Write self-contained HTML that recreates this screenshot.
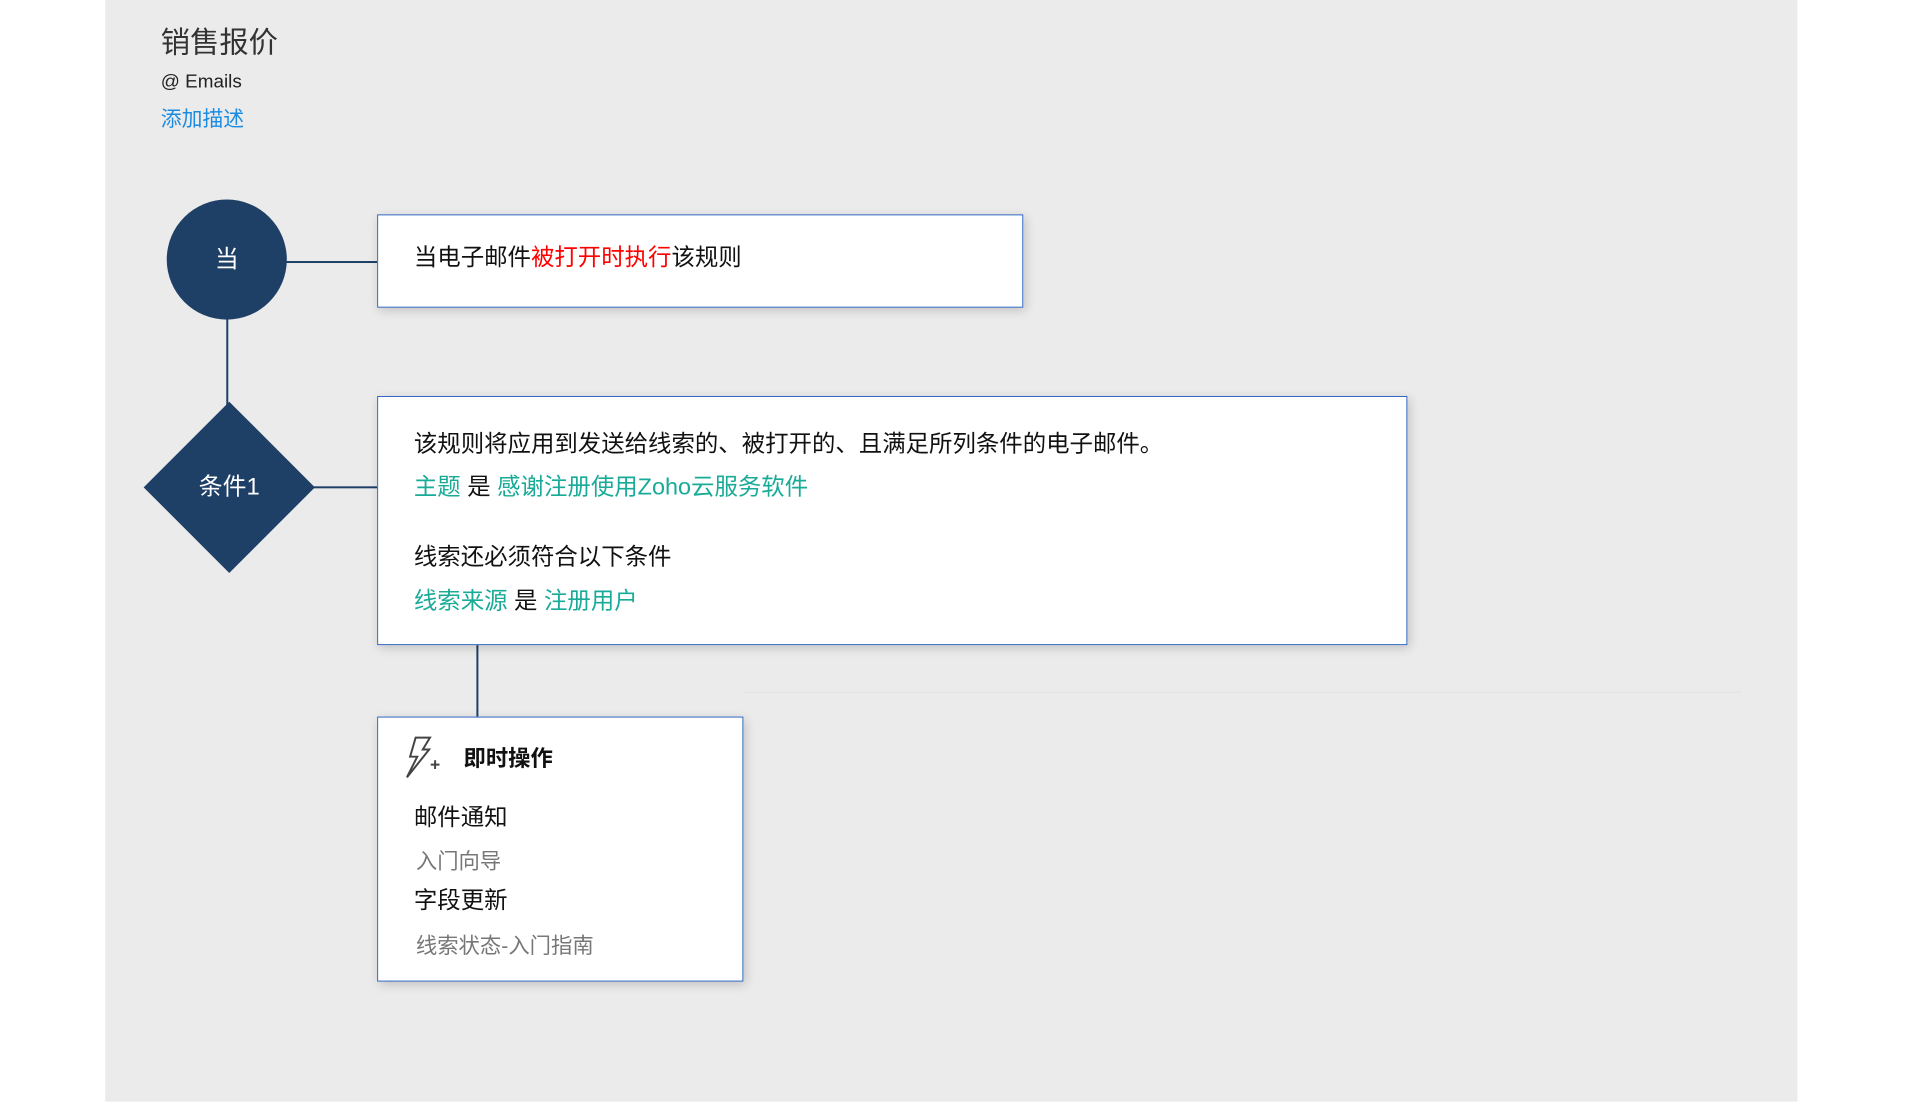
<!DOCTYPE html>
<html><head><meta charset="utf-8">
<style>
*{margin:0;padding:0;box-sizing:border-box}
html,body{width:1910px;height:1100px;background:#fff;overflow:hidden;font-family:"Liberation Sans","Noto Sans CJK SC",sans-serif}
.wrap{position:absolute;left:0;top:0;width:1920px;height:1110px;transform:scale(0.9925);transform-origin:0 0}
.panel{position:absolute;left:106px;top:0;width:1705px;height:1110px;background:#ebebeb}
.abs{position:absolute;white-space:nowrap}
.box{position:absolute;background:#fff;border:1px solid #2f66c4;box-shadow:2px 3px 10px rgba(0,0,0,.18)}
.ln{position:absolute;background:#1e3f66}
.t{color:#19ab97}
.txt{font-size:23.6px;color:#111;line-height:1}
</style></head><body>
<div class="wrap">
<div class="panel"></div>
<div class="abs" style="left:162px;top:29px;font-size:29.5px;color:#333;line-height:1">销售报价</div>
<div class="abs" style="left:162px;top:73px;font-size:19px;color:#222;line-height:1">@ Emails</div>
<div class="abs" style="left:162px;top:110px;font-size:21px;color:#1a8be0;line-height:1">添加描述</div>

<div class="ln" style="left:228px;top:300px;width:2px;height:110px"></div>
<div class="ln" style="left:288px;top:263px;width:92px;height:2px"></div>
<div class="ln" style="left:316px;top:490px;width:64px;height:2px"></div>
<div class="ln" style="left:480px;top:649px;width:2px;height:73px"></div>
<div class="abs" style="left:749px;top:697px;width:1006px;height:1px;background:#e2e2e2"></div>

<div class="abs" style="left:168px;top:201px;width:121px;height:121px;border-radius:50%;background:#1e3f66;color:#fff;font-size:24px;line-height:121px;text-align:center">当</div>
<div class="abs" style="left:170px;top:430px;width:122px;height:122px;background:#1e3f66;transform:rotate(45deg)"></div>
<div class="abs" style="left:170px;top:430px;width:122px;height:122px;color:#fff;font-size:24px;line-height:122px;text-align:center">条件1</div>

<div class="box" style="left:380px;top:216px;width:651px;height:94px">
 <div class="abs txt" style="left:36px;top:32px">当电子邮件<span style="color:#f00">被打开时执行</span>该规则</div>
</div>

<div class="box" style="left:380px;top:399px;width:1038px;height:251px">
 <div class="abs txt" style="left:36px;top:37px">该规则将应用到发送给线索的、被打开的、且满足所列条件的电子邮件。</div>
 <div class="abs txt" style="left:36px;top:80px"><span class="t">主题</span> 是 <span class="t">感谢注册使用Zoho云服务软件</span></div>
 <div class="abs txt" style="left:36px;top:151px">线索还必须符合以下条件</div>
 <div class="abs txt" style="left:36px;top:195px"><span class="t">线索来源</span> 是 <span class="t">注册用户</span></div>
</div>

<div class="box" style="left:380px;top:722px;width:369px;height:267px">
 <svg class="abs" style="left:25px;top:17px" width="48" height="48" viewBox="0 0 60 60" fill="none" stroke="#444" stroke-width="2.5" stroke-linejoin="miter">
  <path d="M16 4 L34 4 L25 19 L33 19 L5 54 L18 28 L9 28 Z"/>
  <path d="M35 38 H46 M40.5 32.5 V43.5"/>
 </svg>
 <div class="abs" style="left:86px;top:31px;font-size:22.5px;font-weight:bold;color:#111;line-height:1">即时操作</div>
 <div class="abs txt" style="left:36px;top:90px">邮件通知</div>
 <div class="abs" style="left:38px;top:135px;font-size:21.5px;color:#777;line-height:1">入门向导</div>
 <div class="abs txt" style="left:36px;top:174px">字段更新</div>
 <div class="abs" style="left:38px;top:220px;font-size:21.5px;color:#777;line-height:1">线索状态-入门指南</div>
</div>
</div>
</body></html>
